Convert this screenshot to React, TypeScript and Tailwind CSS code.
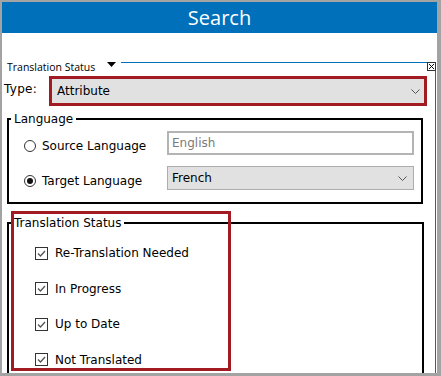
import React from 'react';

const Chevron = () => (
  <svg width="9" height="5" viewBox="0 0 9 5" className="shrink-0">
    <polyline points="0.5,0.5 4.5,4.5 8.5,0.5" fill="none" stroke="#555" strokeWidth="1" />
  </svg>
);

const Radio = ({ checked }: { checked?: boolean }) => (
  <span className="w-[12px] h-[12px] rounded-full border border-[#333] bg-white flex items-center justify-center shrink-0">
    {checked && <span className="w-[6px] h-[6px] rounded-full bg-[#111]" />}
  </span>
);

const CheckBox = () => (
  <svg width="13" height="13" viewBox="0 0 13 13" className="shrink-0">
    <rect x="0.5" y="0.5" width="12" height="12" fill="white" stroke="#333" />
    <polyline points="3,6.5 5.5,9 10,4" fill="none" stroke="#555" strokeWidth="1.3" />
  </svg>
);

const statuses = ['Re-Translation Needed', 'In Progress', 'Up to Date', 'Not Translated'];

export default function App() {
  return (
    <div
      className="w-[441px] h-[376px] overflow-hidden bg-white border-solid border-[#a3a3a3] border-l-2 border-t-2 border-r-4 border-b-[3px] flex flex-col text-black"
      style={{ fontFamily: '"DejaVu Sans", Verdana, sans-serif' }}
    >
      {/* Title bar */}
      <div
        className="h-[31px] shrink-0 bg-[#0070bb] flex items-center justify-center text-white text-[20px]"
        style={{ fontFamily: '"Open Sans", sans-serif' }}
      >
        Search
      </div>

      <div className="flex-1 relative flex flex-col pt-[26px] min-h-0">
        {/* Panel caption */}
        <div className="flex items-start h-[14px] shrink-0">
          <div
            className="w-[105px] pl-[5px] pt-[1px] text-[10.5px] leading-[14px]"
            style={{ fontFamily: '"Open Sans", sans-serif' }}
          >
            Translation Status
          </div>
          <svg width="9" height="5" viewBox="0 0 9 5" className="mt-[3px] shrink-0">
            <polygon points="0,0 9,0 4.5,5" fill="#000" />
          </svg>
          <div className="ml-[5px] mr-[1px] mt-[3px] flex-1 self-stretch border-t border-r border-[#0070bb]" />
        </div>

        {/* close box */}
        <svg width="9" height="9" viewBox="0 0 9 9" className="absolute left-[425px] top-[29px]">
          <rect x="0.5" y="0.5" width="8" height="8" fill="white" stroke="#333" />
          <line x1="2" y1="2" x2="7" y2="7" stroke="#111" />
          <line x1="7" y1="2" x2="2" y2="7" stroke="#111" />
        </svg>

        <div className="flex-1 mr-[1px] border-r border-[#0070bb] flex flex-col pt-[3px]">
          {/* Type row */}
          <div className="flex items-start shrink-0">
            <div className="w-[47px] pl-[2px] pt-[5px] text-[12px] leading-[16px] tracking-[0.3px]">Type:</div>
            <div className="w-[378px] h-[30px] border-[3px] border-[#a31b22] bg-[#e1e1e1] flex items-center justify-between pl-[5px] pr-[4px] text-[12px]">
              <span>Attribute</span>
              <Chevron />
            </div>
          </div>

          {/* Language */}
          <fieldset className="ml-[5px] w-[416px] mt-[5px] border-2 border-black shrink-0 pt-[4px] pb-[12px] flex flex-col gap-[11px]">
            <legend className="ml-[2px] px-[3px] text-[12px] leading-[16px]">Language</legend>
            <div className="flex items-start h-[24px]">
              <div className="w-[158px] flex items-center pl-[15px] pt-[8px] text-[12px] leading-[14px]">
                <Radio />
                <span className="ml-[6px]">Source Language</span>
              </div>
              <div className="w-[247px] h-[24px] border-2 border-[#b4b4b4] bg-white flex items-center pl-[3px] text-[12px] text-[#7a7a7a]">
                English
              </div>
            </div>
            <div className="flex items-start h-[24px]">
              <div className="w-[158px] flex items-center pl-[15px] pt-[8px] text-[12px] leading-[14px]">
                <Radio checked />
                <span className="ml-[6px]">Target Language</span>
              </div>
              <div className="w-[247px] h-[24px] border border-[#adadad] bg-[#e1e1e1] flex items-center justify-between pl-[4px] pr-[6px] text-[12px]">
                <span>French</span>
                <Chevron />
              </div>
            </div>
          </fieldset>

          {/* Translation Status */}
          <fieldset className="ml-[5px] w-[417px] mt-[11px] border-2 border-black h-[200px] shrink-0 pt-[12px] flex flex-col gap-[15.5px]">
            <legend className="ml-[2px] px-[3px] text-[12px] leading-[16px]">Translation Status</legend>
            {statuses.map((s) => (
              <div key={s} className="flex items-center h-[20px] pl-[26px] text-[12px]">
                <CheckBox />
                <span className="ml-[7px]">{s}</span>
              </div>
            ))}
          </fieldset>
        </div>

        {/* highlight annotation */}
        <div className="absolute left-[9px] top-[178px] w-[220px] h-[160px] border-[3px] border-[#a31b22] pointer-events-none" />
      </div>
    </div>
  );
}
